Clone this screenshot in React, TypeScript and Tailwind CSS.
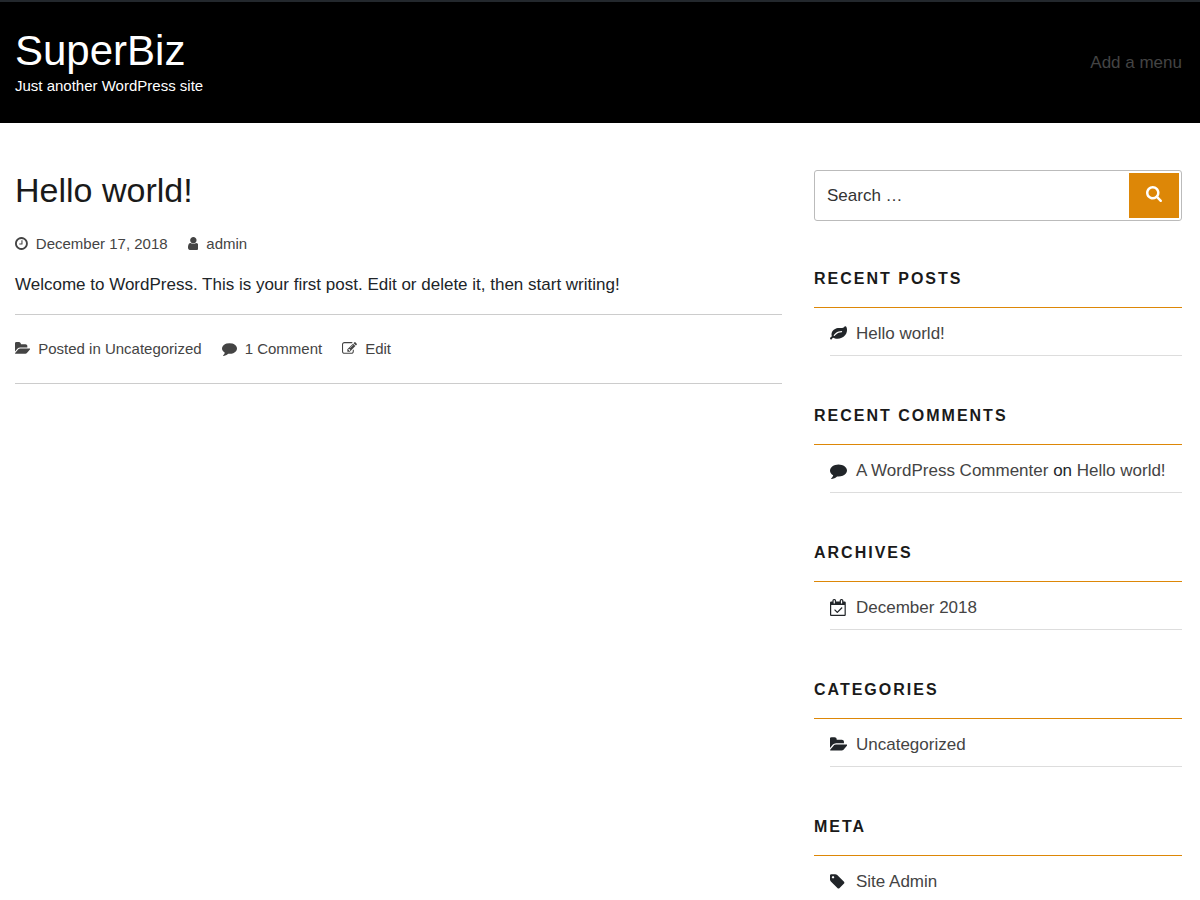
import type { ReactNode } from "react";

// Font Awesome 4 glyphs, 1792 units per em
const icons = {
  clock: {
    box: "128 0 1536 1792",
    d: "M1024 544v448q0 14-9 23t-23 9h-320q-14 0-23-9t-9-23v-64q0-14 9-23t23-9h224v-352q0-14 9-23t23-9h64q14 0 23 9t9 23zm416 352q0-148-73-273t-198-198-273-73-273 73-198 198-73 273 73 273 198 198 273 73 273-73 198-198 73-273zm224 0q0 209-103 385.5t-279.5 279.5-385.5 103-385.5-103-279.5-279.5-103-385.5 103-385.5 279.5-279.5 385.5-103 385.5 103 279.5 279.5 103 385.5z",
  },
  user: {
    box: "256 0 1280 1792",
    d: "M1536 1399q0 109-62.5 187t-150.5 78h-854q-88 0-150.5-78t-62.5-187q0-85 8.5-160.5t31.5-152 58.5-131 94-89 134.5-34.5q131 128 313 128t313-128q76 0 134.5 34.5t94 89 58.5 131 31.5 152 8.5 160.5zm-256-887q0 159-112.5 271.5t-271.5 112.5-271.5-112.5-112.5-271.5 112.5-271.5 271.5-112.5 271.5 112.5 112.5 271.5z",
  },
  folder: {
    box: "0 0 1815 1792",
    d: "M1815 952q0 31-31 66l-336 396q-43 51-120.5 86.5t-143.5 35.5h-1088q-34 0-60.5-13t-26.5-43q0-31 31-66l336-396q43-51 120.5-86.5t143.5-35.5h1088q34 0 60.5 13t26.5 43zm-343-344v160h-832q-94 0-197 47.5t-164 119.5l-337 396-5 6q0-4-.5-12.5t-.5-12.5v-960q0-92 66-158t158-66h320q92 0 158 66t66 158v32h544q92 0 158 66t66 158z",
  },
  comment: {
    box: "0 0 1792 1792",
    d: "M1792 896q0 174-120 321.5t-326 233-450 85.5q-70 0-145-8-198 175-460 242-49 14-114 22-17 2-30.5-9t-17.5-29v-1q-3-4-.5-12t2-10 4.5-9.5l6-9 7-8.5 8-9q7-8 31-34.5t34.5-38 31-39.5 32.5-51 27-59 26-76q-157-89-247.5-220t-90.5-281q0-130 71-248.5t191-204.5 286-136.5 348-50.5 348 50.5 286 136.5 191 204.5 71 248.5z",
  },
  edit: {
    box: "0 0 1792 1792",
    d: "M888 1184l116-116-152-152-116 116v56h96v96h56zm440-720q-16-16-33 1l-350 350q-17 17-1 33t33-1l350-350q17-17 1-33zm80 594v190q0 119-84.5 203.5t-203.5 84.5h-832q-119 0-203.5-84.5t-84.5-203.5v-832q0-119 84.5-203.5t203.5-84.5h832q63 0 117 25 15 7 18 23 3 17-9 29l-49 49q-14 14-32 8-23-6-45-6h-832q-66 0-113 47t-47 113v832q0 66 47 113t113 47h832q66 0 113-47t47-113v-126q0-13 9-22l64-64q15-15 35-7t20 29zm-96-738l288 288-672 672h-288v-288zm444 132l-92 92-288-288 92-92q28-28 68-28t68 28l152 152q28 28 28 68t-28 68z",
  },
  leaf: {
    box: "0 0 1792 1792",
    d: "M1280 704q0-26-19-45t-45-19q-172 0-318 49.5t-259.5 134-235.5 219.5q-19 21-19 45 0 26 19 45t45 19q24 0 45-19 27-24 74-71t67-66q137-124 268.5-176t313.5-52q26 0 45-19t19-45zm512-198q0 95-20 193-46 224-184.5 383t-357.5 268q-214 108-438 108-148 0-286-47-15-5-88-42t-96-37q-16 0-39.5 32t-45 70-52.5 70-60 32q-43 0-63.5-17.5t-45.5-59.5q-2-4-6-11t-5.5-10-3-9.5-1.5-13.5q0-35 31-73.5t68-65.5 68-56 31-48q0-4-14-38t-16-44q-9-51-9-104 0-115 43.5-220t119-184.5 170.5-139 204-95.5q55-18 145-25.5t179.5-9 178.5-6 163.5-24 113.5-56.5l29.5-29.5 29.5-28 27-20 36.5-16 43.5-4.5q39 0 70.5 46t47.5 112 24 124 8 96z",
  },
  calendar: {
    box: "0 0 1664 1792",
    d: "M1303 964l-512 512q-10 9-23 9t-23-9l-288-288q-9-10-9-23t9-22l46-46q9-9 22-9t23 9l220 220 444-444q10-9 23-9t22 9l46 46q9 9 9 22t-9 23zm-1175 700h1408v-1024h-1408v1024zm384-1216v-288q0-14-9-23t-23-9h-64q-14 0-23 9t-9 23v288q0 14 9 23t23 9h64q14 0 23-9t9-23zm768 0v-288q0-14-9-23t-23-9h-64q-14 0-23 9t-9 23v288q0 14 9 23t23 9h64q14 0 23-9t9-23zm384-64v1280q0 52-38 90t-90 38h-1408q-52 0-90-38t-38-90v-1280q0-52 38-90t90-38h128v-96q0-66 47-113t113-47h64q66 0 113 47t47 113v96h384v-96q0-66 47-113t113-47h64q66 0 113 47t47 113v96h128q52 0 90 38t38 90z",
  },
  tag: {
    box: "128 0 1536 1792",
    d: "M576 448q0-53-37.5-90.5t-90.5-37.5-90.5 37.5-37.5 90.5 37.5 90.5 90.5 37.5 90.5-37.5 37.5-90.5zm1067 576q0 53-37 90l-491 492q-39 37-91 37-53 0-90-37l-715-716q-38-37-64.5-101t-26.5-117v-416q0-52 38-90t90-38h416q53 0 117 26.5t102 64.5l715 714q37 39 37 91z",
  },
  search: {
    box: "64 128 1664 1664",
    d: "M1216 832q0-185-131.5-316.5t-316.5-131.5-316.5 131.5-131.5 316.5 131.5 316.5 316.5 131.5 316.5-131.5 131.5-316.5zm512 832q0 52-38 90t-90 38q-54 0-90-38l-343-342q-179 124-399 124-143 0-273.5-55.5t-225-150-150-225-55.5-273.5 55.5-273.5 150-225 225-150 273.5-55.5 273.5 55.5 225 150 150 225 55.5 273.5q0 220-124 399l343 343q37 37 37 90z",
  },
};

type IconName = keyof typeof icons;

function Icon({ name, className }: { name: IconName; className: string }) {
  return (
    <svg viewBox={icons[name].box} className={`shrink-0 fill-current ${className}`} aria-hidden="true">
      <path d={icons[name].d} />
    </svg>
  );
}

function MetaItem({ icon, children }: { icon: IconName; children: ReactNode }) {
  return (
    <span className="flex items-center gap-2">
      <Icon name={icon} className="mb-[2px] h-[15px] w-auto" />
      {children}
    </span>
  );
}

function Widget({ title, icon, children }: { title: string; icon: IconName; children: ReactNode }) {
  return (
    <section className="mb-12">
      <h2 className="border-b border-[#dd8707] pb-4 text-base leading-6 font-bold tracking-[2px] text-[#1a1a1a] uppercase">
        {title}
      </h2>
      <ul className="pl-4">
        <li className="flex items-center border-b border-[#dddddd] pt-[14px] pb-[9px] leading-6">
          <span className="flex w-[26px]">
            <Icon name={icon} className="mb-[2px] h-[17px] w-auto" />
          </span>
          <span>{children}</span>
        </li>
      </ul>
    </section>
  );
}

function SideLink({ children }: { children: ReactNode }) {
  return (
    <a href="#" className="text-[#444444] hover:underline">
      {children}
    </a>
  );
}

export default function App() {
  return (
    <div className="min-h-screen bg-white font-['Liberation_Sans',Arial,sans-serif] text-[17px] text-[#212529]">

      {/* HEADER */}
      <header className="flex items-center justify-between border-t-2 border-[#23282d] bg-black pt-[26px] pr-[18px] pb-[25px] pl-[15px]">
        <div>
          <h1 className="text-[42px] leading-[46px] text-white">
            <a href="#">SuperBiz</a>
          </h1>
          <p className="text-[15px] leading-6 text-white">Just another WordPress site</p>
        </div>
        <nav>
          <a href="#" className="text-[#444444]">Add a menu</a>
        </nav>
      </header>

      {/* CONTENT */}
      <div className="flex items-start gap-8 pt-[47px] pr-[18px] pl-[15px]">

        {/* POST */}
        <main className="min-w-0 flex-1">
          <article className="border-b border-[#cccccc]">
            <h2 className="text-[34px] leading-10 text-[#1a1a1a]">
              <a href="#">Hello world!</a>
            </h2>

            <div className="mt-[22px] flex gap-5 text-[15px] leading-6 text-[#444444]">
              <MetaItem icon="clock"><a href="#">December 17, 2018</a></MetaItem>
              <MetaItem icon="user"><a href="#">admin</a></MetaItem>
            </div>

            <p className="mt-[17px] leading-6">
              Welcome to WordPress. This is your first post. Edit or delete it, then start writing!
            </p>

            <footer className="mt-[17px] flex gap-5 border-t border-[#cccccc] py-[22px] text-[15px] leading-6 text-[#444444]">
              <MetaItem icon="folder"><span>Posted in <a href="#">Uncategorized</a></span></MetaItem>
              <MetaItem icon="comment"><a href="#">1 Comment</a></MetaItem>
              <MetaItem icon="edit"><a href="#">Edit</a></MetaItem>
            </footer>
          </article>
        </main>

        {/* SIDEBAR */}
        <aside className="w-[368px] shrink-0">
          <form className="mb-[46px] flex rounded-[3px] border border-[#bbbbbb] p-[2px]">
            <input
              type="search"
              aria-label="Search"
              placeholder="Search …"
              className="h-[45px] min-w-0 flex-1 px-[10px] leading-6 outline-none placeholder:text-[#333333]"
            />
            <button type="submit" aria-label="Search" className="flex w-[50px] items-center justify-center bg-[#dd8707] pb-1 text-white">
              <Icon name="search" className="h-4 w-4" />
            </button>
          </form>

          <Widget title="Recent Posts" icon="leaf">
            <SideLink>Hello world!</SideLink>
          </Widget>
          <Widget title="Recent Comments" icon="comment">
            <SideLink>A WordPress Commenter</SideLink> on <SideLink>Hello world!</SideLink>
          </Widget>
          <Widget title="Archives" icon="calendar">
            <SideLink>December 2018</SideLink>
          </Widget>
          <Widget title="Categories" icon="folder">
            <SideLink>Uncategorized</SideLink>
          </Widget>
          <Widget title="Meta" icon="tag">
            <SideLink>Site Admin</SideLink>
          </Widget>
        </aside>

      </div>
    </div>
  );
}
